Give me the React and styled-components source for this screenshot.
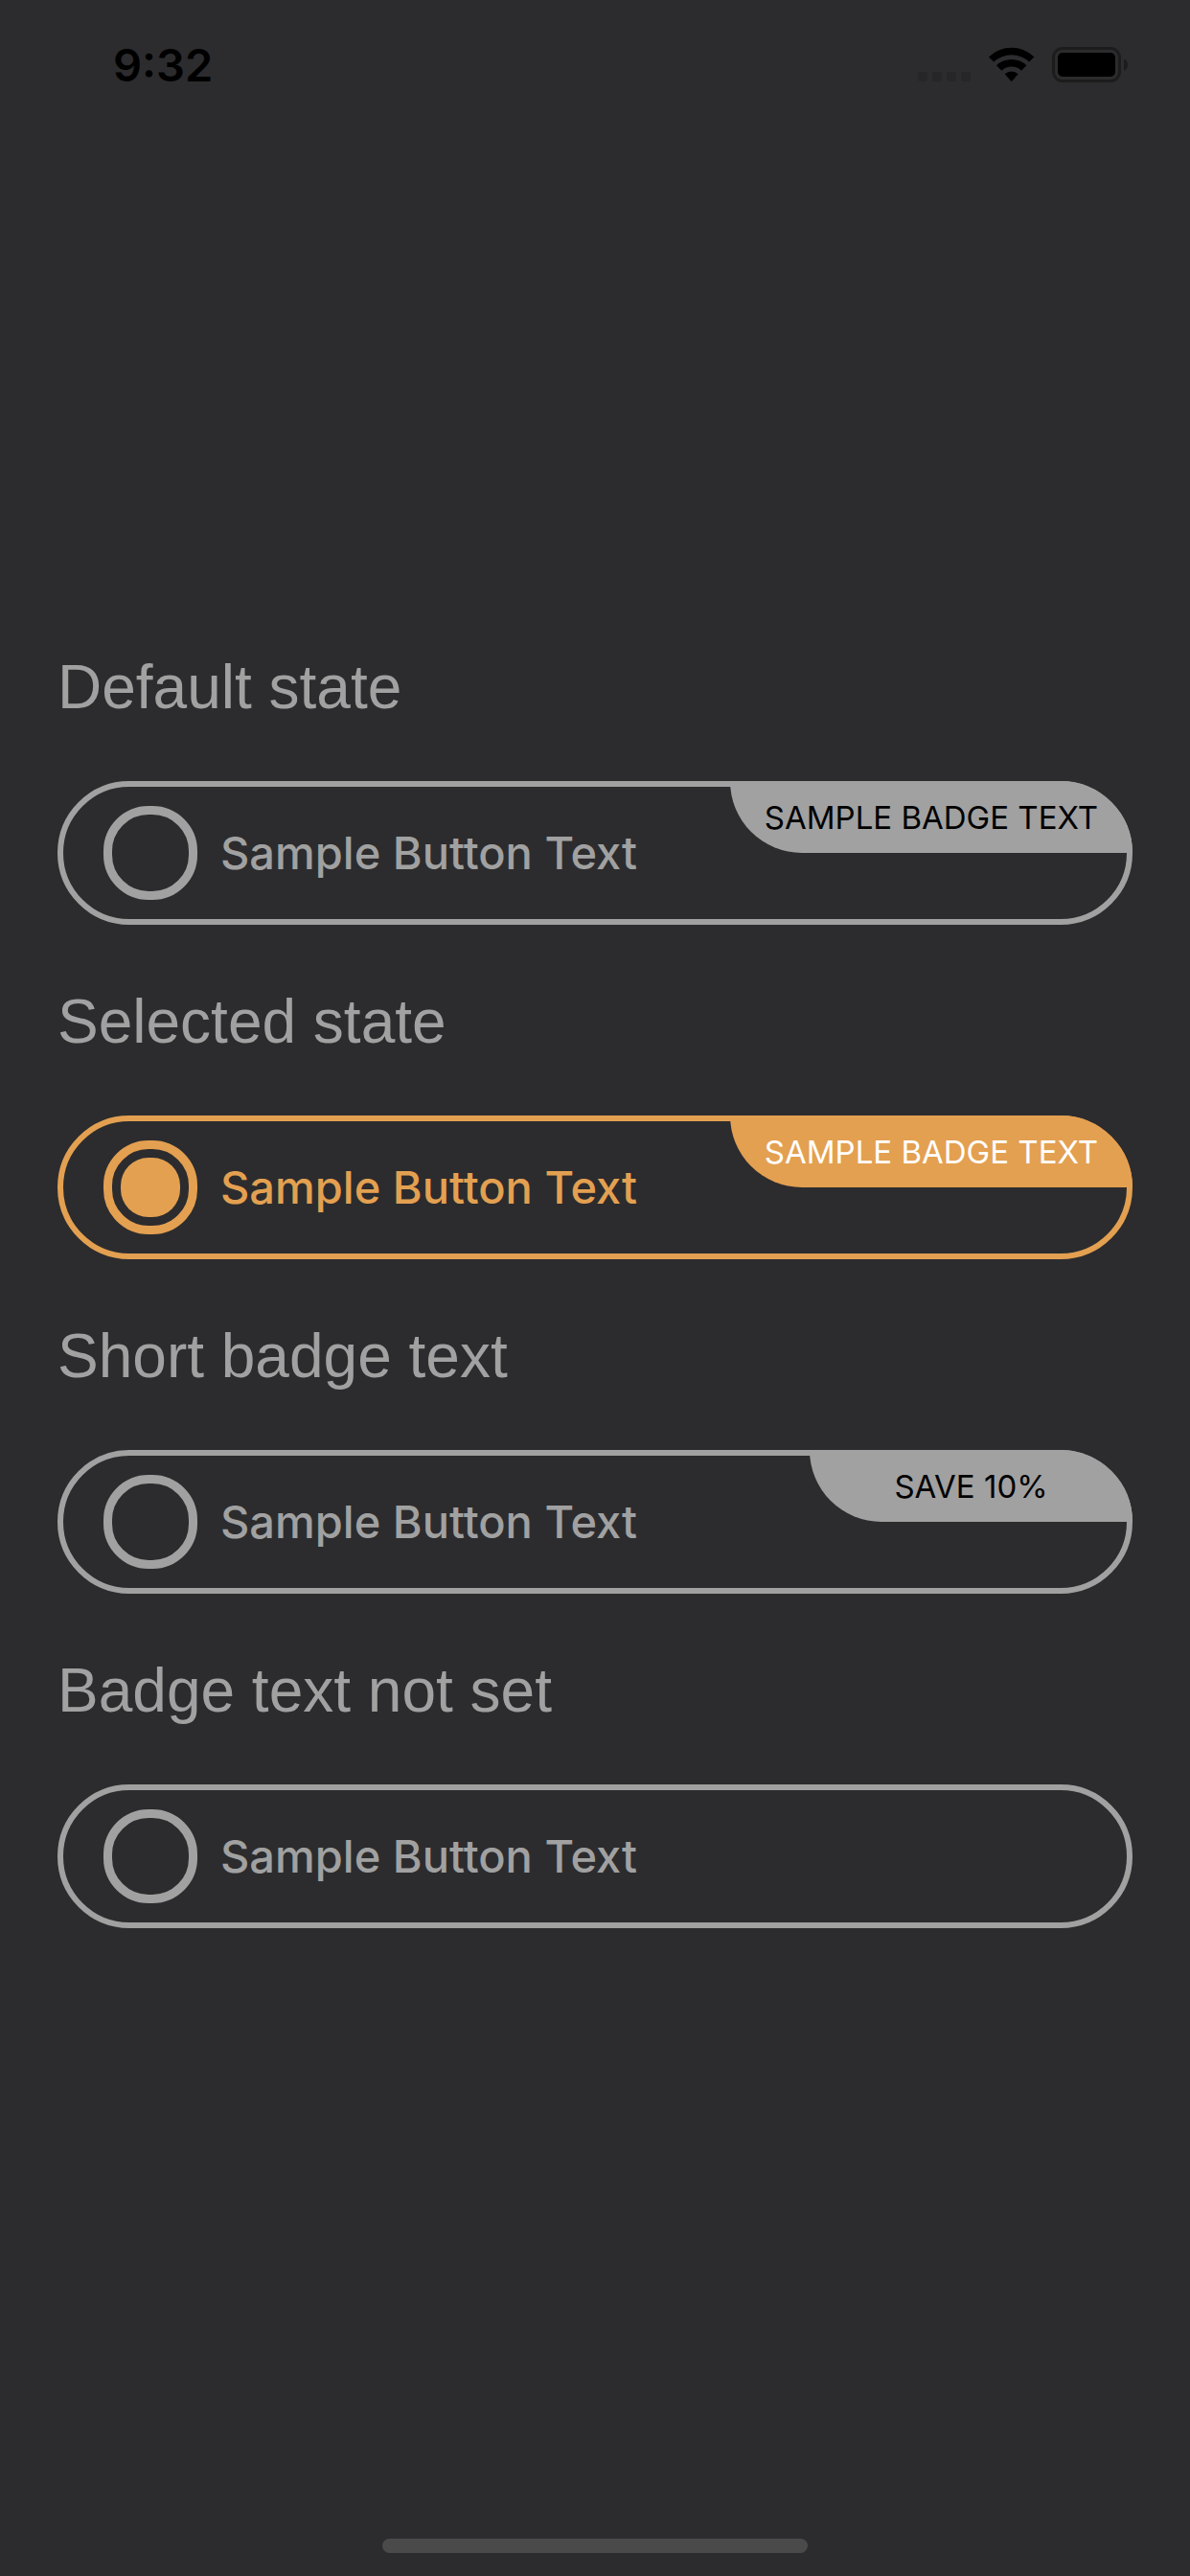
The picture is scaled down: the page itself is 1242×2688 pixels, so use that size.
import React, { useState } from "react";
import styled, { createGlobalStyle } from "styled-components";

const colors = {
  background: "#2c2c2e",
  muted: "#a1a1a1",
  accent: "#e3a051",
};

const GlobalStyle = createGlobalStyle`
  *, *::before, *::after { box-sizing: border-box; }
  body {
    margin: 0;
    background: ${colors.background};
    font-family: Inter, "Liberation Sans", sans-serif;
  }
`;

const Screen = styled.div`
  min-height: 100vh;
  display: grid;
  grid-template-columns: minmax(0, 1fr);
  grid-template-rows: 1fr auto 1fr;
`;

const StatusBar = styled.header`
  align-self: start;
  display: flex;
  justify-content: space-between;
  align-items: center;
  padding: 38px 64px 0 118px;
  color: #000;
`;

const Clock = styled.time`
  font-size: 47px;
  line-height: 60px;
  font-weight: 600;
`;

const StatusIcons = styled.div`
  display: flex;
  align-items: center;
`;

const Options = styled.main`
  display: flex;
  flex-direction: column;
  gap: 60px;
  padding: 0 60px;
`;

const Option = styled.section`
  display: flex;
  flex-direction: column;
  gap: 57px;
`;

const Heading = styled.h2`
  margin: 0;
  color: ${colors.muted};
  font-family: "Liberation Sans", Arial, sans-serif;
  font-size: 64px;
  line-height: 82px;
  font-weight: 400;
`;

const RadioButton = styled.label`
  position: relative;
  display: flex;
  align-items: center;
  gap: 24px;
  height: 150px;
  padding: 0 42px;
  border: 6px solid currentColor;
  border-radius: 75px;
  color: ${(p) => (p.$selected ? colors.accent : colors.muted)};
  cursor: pointer;
`;

const Radio = styled.input`
  appearance: none;
  flex: none;
  width: 98px;
  height: 98px;
  margin: 0;
  padding: 9px;
  border: 9px solid currentColor;
  border-radius: 47px;
  color: inherit;
  background-clip: content-box;

  &:checked {
    background-color: currentColor;
  }
`;

const ButtonText = styled.span`
  font-size: 47px;
  line-height: 60px;
  font-weight: 500;
`;

const Badge = styled.span`
  position: absolute;
  top: -6px;
  right: -6px;
  display: flex;
  align-items: center;
  justify-content: center;
  min-width: 337px;
  height: 75px;
  padding: 0 36px;
  border-radius: 0 75px 0 75px;
  background: ${(p) => (p.$selected ? colors.accent : colors.muted)};
  color: ${(p) => (p.$selected ? "#fff" : "#000")};
  font-size: 33px;
  line-height: 40px;
  text-transform: uppercase;
  white-space: nowrap;
`;

const HomeArea = styled.footer`
  align-self: end;
  display: flex;
  justify-content: center;
  padding: 0 24px 24px;
`;

const HomeIndicator = styled.div`
  width: 444px;
  height: 15px;
  border-radius: 8px;
  background: #4a4a4a;
`;

function StatusGlyphs() {
  return (
    <svg width="220" height="38" viewBox="0 0 220 38" aria-hidden="true">
      <g fill="#262628">
        <rect x="0" y="26" width="10" height="10" rx="3" />
        <rect x="15" y="26" width="10" height="10" rx="3" />
        <rect x="30" y="26" width="10" height="10" rx="3" />
        <rect x="45" y="26" width="10" height="10" rx="3" />
      </g>
      <path d="M74 10.4 A34 34 0 0 1 121.400 10.400 L116.200 15.600 A27 27 0 0 0 79.200 15.600 Z" />
      <path d="M82 19.300 A22.500 22.500 0 0 1 113.400 19.300 L108 24.700 A15 15 0 0 0 87.400 24.700 Z" />
      <path d="M90.800 28.200 A10 10 0 0 1 104.600 28.200 L98.600 35.200 Q97.700 36.200 96.800 35.200 Z" />
      <rect x="141.500" y="1.500" width="69" height="34" rx="9.500" fill="none" stroke="#1c1c1d" strokeWidth="3" />
      <rect x="146" y="6" width="60" height="25" rx="5" />
      <path d="M215 12.500 Q219 14 219 18.500 Q219 23 215 25 Z" fill="#1c1c1d" />
    </svg>
  );
}

const options = [
  { id: "default", title: "Default state", badge: "Sample badge text" },
  { id: "selected", title: "Selected state", badge: "Sample badge text" },
  { id: "short", title: "Short badge text", badge: "Save 10%" },
  { id: "none", title: "Badge text not set" },
];

export default function App() {
  const [current, setCurrent] = useState("selected");

  return (
    <>
      <GlobalStyle />
      <Screen>
        <StatusBar>
          <Clock>9:32</Clock>
          <StatusIcons>
            <StatusGlyphs />
          </StatusIcons>
        </StatusBar>
        <Options>
          {options.map(({ id, title, badge }) => {
            const selected = id === current;
            return (
              <Option key={id}>
                <Heading>{title}</Heading>
                <RadioButton htmlFor={id} $selected={selected}>
                  <Radio
                    type="radio"
                    name="plan"
                    id={id}
                    checked={selected}
                    onChange={() => setCurrent(id)}
                  />
                  <ButtonText>Sample Button Text</ButtonText>
                  {badge && <Badge $selected={selected}>{badge}</Badge>}
                </RadioButton>
              </Option>
            );
          })}
        </Options>
        <HomeArea>
          <HomeIndicator />
        </HomeArea>
      </Screen>
    </>
  );
}
